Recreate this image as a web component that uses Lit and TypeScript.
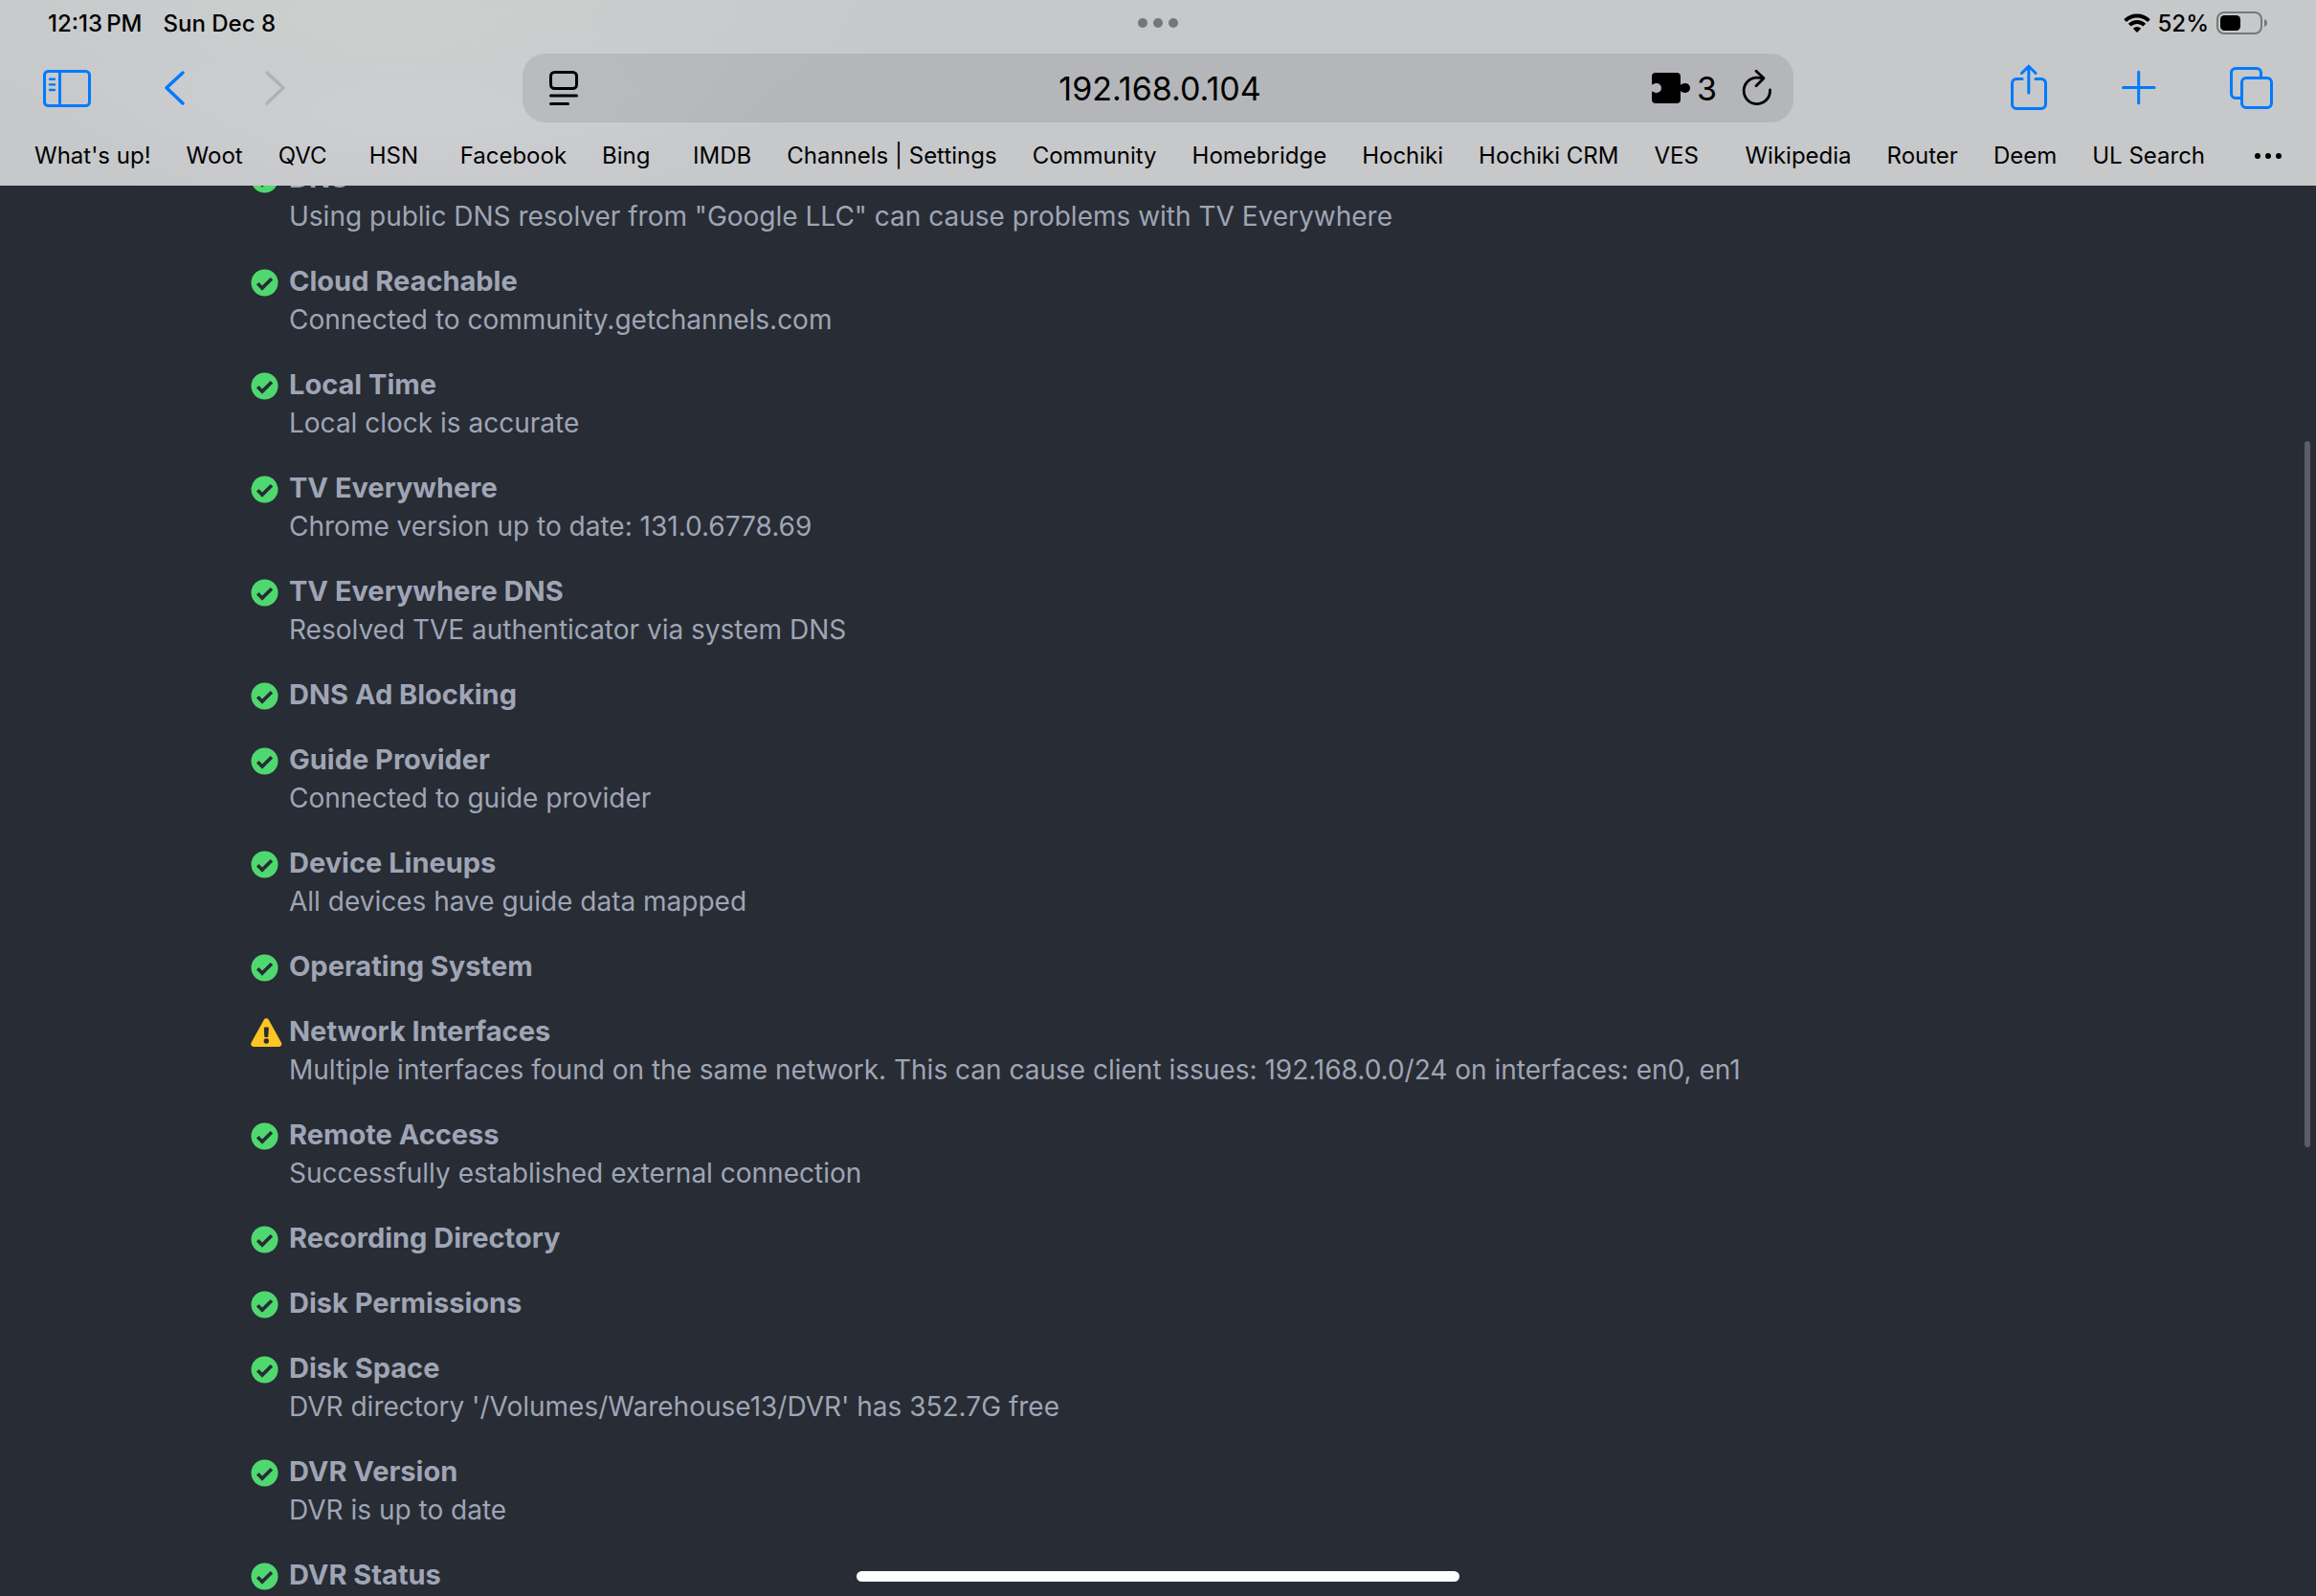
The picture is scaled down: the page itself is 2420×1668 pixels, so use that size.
import { LitElement, html, svg, css, nothing } from "lit";
import { customElement, property, state } from "lit/decorators.js";
import { classMap } from "lit/directives/class-map.js";

interface Check {
  title: string;
  detail?: string;
  warning?: boolean;
}

const BOOKMARKS = [
  "What's up!", "Woot", "QVC", "HSN", "Facebook", "Bing", "IMDB",
  "Channels | Settings", "Community", "Homebridge", "Hochiki",
  "Hochiki CRM", "VES", "Wikipedia", "Router", "Deem", "UL Search",
];

const CHECKS: Check[] = [
  { title: "DNS", detail: 'Using public DNS resolver from "Google LLC" can cause problems with TV Everywhere' },
  { title: "Cloud Reachable", detail: "Connected to community.getchannels.com" },
  { title: "Local Time", detail: "Local clock is accurate" },
  { title: "TV Everywhere", detail: "Chrome version up to date: 131.0.6778.69" },
  { title: "TV Everywhere DNS", detail: "Resolved TVE authenticator via system DNS" },
  { title: "DNS Ad Blocking" },
  { title: "Guide Provider", detail: "Connected to guide provider" },
  { title: "Device Lineups", detail: "All devices have guide data mapped" },
  { title: "Operating System" },
  {
    title: "Network Interfaces",
    detail: "Multiple interfaces found on the same network. This can cause client issues: 192.168.0.0/24 on interfaces: en0, en1",
    warning: true,
  },
  { title: "Remote Access", detail: "Successfully established external connection" },
  { title: "Recording Directory" },
  { title: "Disk Permissions" },
  { title: "Disk Space", detail: "DVR directory '/Volumes/Warehouse13/DVR' has 352.7G free" },
  { title: "DVR Version", detail: "DVR is up to date" },
  { title: "DVR Status" },
];

@customElement("status-bar")
export class StatusBar extends LitElement {
  static styles = css`
    :host {
      display: grid;
      grid-template-columns: 1fr auto 1fr;
      align-items: center;
      height: 48px;
      padding: 0 50px;
      font-size: 24px;
      font-weight: 500;
    }
    .clock { display: flex; gap: 22px; }
    .power { display: flex; align-items: center; justify-content: flex-end; gap: 8px; }
    .more { display: flex; padding: 0; border: 0; background: none; }
    svg { display: block; }
  `;

  render() {
    return html`
      <div class="clock"><span>12:13&#8201;PM</span><span>Sun Dec 8</span></div>
      <button class="more" aria-label="Window controls">
        <svg width="42" height="10" fill="#76777a">
          <circle cx="5" cy="5" r="5" /><circle cx="21" cy="5" r="5" /><circle cx="37" cy="5" r="5" />
        </svg>
      </button>
      <div class="power">
        <svg width="28" height="20" viewBox="0 0 28 20" fill="none" stroke="#000" stroke-width="4">
          <path d="M1.6 7.6A17.6 17.6 0 0 1 26.4 7.6" />
          <path d="M6.2 12.2A11 11 0 0 1 21.8 12.2" />
          <path d="M14 20l-4.2-4.3a6 6 0 0 1 8.4 0z" fill="#000" stroke="none" />
        </svg>
        <span>52%</span>
        <svg width="54" height="24" viewBox="0 0 54 24">
          <rect x="1" y="1" width="46" height="22" rx="7" fill="none" stroke="#77787a" stroke-width="2" />
          <rect x="4" y="4" width="21" height="16" rx="4.5" />
          <path d="M50 8q3 1.2 3 4t-3 4z" fill="#77787a" />
        </svg>
      </div>
    `;
  }
}

@customElement("browser-toolbar")
export class BrowserToolbar extends LitElement {
  static styles = css`
    :host {
      display: grid;
      grid-template-columns: 1fr minmax(0, 1328px) 1fr;
      align-items: center;
      padding: 8px 40px 0;
    }
    button { display: flex; padding: 0; border: 0; background: none; color: #007aff; font: inherit; }
    button:disabled { color: #b0b1b3; }
    svg { display: block; fill: none; stroke: currentColor; stroke-linecap: round; stroke-linejoin: round; }
    .left { display: flex; gap: 52px; padding-left: 2px; }
    .right { display: flex; gap: 60px; justify-content: flex-end; }
    .address {
      display: grid;
      grid-template-columns: 1fr auto 1fr;
      align-items: center;
      height: 72px;
      padding: 0 22px 0 26px;
      border-radius: 24px;
      background: rgba(60, 60, 67, 0.12);
    }
    .address button { color: #000; }
    .url {
      width: 300px;
      padding: 0;
      border: 0;
      background: none;
      color: #000;
      font: inherit;
      font-size: 34px;
      text-align: center;
      outline: none;
    }
    .actions { display: flex; justify-content: flex-end; align-items: center; gap: 26px; }
    .address .extensions { align-items: center; gap: 6px; font-size: 34px; }
  `;

  @state() private url = "192.168.0.104";

  render() {
    return html`
      <div class="left">
        <button aria-label="Show sidebar">
          <svg width="56" height="56" stroke-width="3">
            <rect x="4.5" y="10.5" width="47" height="36" rx="4" />
            <path d="M20.5 11v35" />
            <path d="M10 18.8h5M10 24.4h5M10 30h5" stroke-width="2.4" />
          </svg>
        </button>
        <button aria-label="Back">
          <svg width="56" height="56" stroke-width="3.5"><path d="M41 12L24 27.8 41 44" /></svg>
        </button>
        <button aria-label="Forward" disabled>
          <svg width="56" height="56" stroke-width="3.5"><path d="M21 12l17 15.8L21 44" /></svg>
        </button>
      </div>
      <div class="address">
        <button aria-label="Page menu">
          <svg width="34" height="40" stroke-width="3">
            <rect x="3.5" y="3.5" width="27" height="17" rx="4" />
            <path d="M3.5 28h27M3.5 36.5h18" />
          </svg>
        </button>
        <input class="url" aria-label="Address" .value=${this.url}
          @input=${(e: Event) => (this.url = (e.target as HTMLInputElement).value)} />
        <div class="actions">
          <button class="extensions" aria-label="3 extensions">
            <svg width="42" height="34">
              <path fill="currentColor" stroke="none" d="M5 1h22a4 4 0 0 1 4 4v8.5c1.5 0 2-1.500 5-1.500a5 5 0 0 1 0 10c-3 0-3.500-1.500-5-1.500V29a4 4 0 0 1-4 4H5a4 4 0 0 1-4-4v-8.500c1.500 0 2 1.500 5 1.500a5 5 0 0 0 0-10c-3 0-3.500 1.500-5 1.500V5a4 4 0 0 1 4-4z" />
            </svg>
            <span>3</span>
          </button>
          <button aria-label="Reload">
            <svg width="32" height="40" stroke-width="2.8">
              <path d="M29.5 22A13.7 13.7 0 1 1 15.8 9.2q3.5 0 6.5 .4" />
              <path d="M15 2.2l8 7.6-8 8" />
            </svg>
          </button>
        </div>
      </div>
      <div class="right">
        <button aria-label="Share">
          <svg width="56" height="56" stroke-width="3">
            <path d="M21 18.5h-6a4.5 4.5 0 0 0-4.5 4.5v22a4.5 4.5 0 0 0 4.5 4.5h26a4.5 4.5 0 0 0 4.5-4.5V23a4.5 4.5 0 0 0-4.5-4.5h-6" />
            <path d="M27.8 33V5.5M20.5 12.5l7.3-7.3 7.3 7.3" />
          </svg>
        </button>
        <button aria-label="New tab">
          <svg width="56" height="56" stroke-width="3"><path d="M10.5 27.5h32.5M26.7 11.2v32.6" /></svg>
        </button>
        <button aria-label="Tab overview">
          <svg width="56" height="56" stroke-width="3">
            <path d="M38.5 16v-4a4.5 4.5 0 0 0-4.5-4.5H12A4.5 4.5 0 0 0 7.5 12v22a4.5 4.5 0 0 0 4.5 4.5h5" />
            <rect x="18.5" y="17.5" width="31" height="31" rx="4.5" />
          </svg>
        </button>
      </div>
    `;
  }
}

@customElement("bookmarks-bar")
export class BookmarksBar extends LitElement {
  static styles = css`
    :host { display: block; padding: 4px 36px 0; font-size: 24px; line-height: 62px; }
    nav { display: flex; gap: 37px; align-items: center; white-space: nowrap; }
    a { min-width: 58px; color: #000; text-decoration: none; }
    button { display: flex; margin-left: auto; padding: 0; border: 0; background: none; }
  `;

  render() {
    return html`
      <nav aria-label="Favorites">
        ${BOOKMARKS.map((name) => html`<a href="#">${name}</a>`)}
        <button aria-label="More bookmarks">
          <svg width="28" height="8"><circle cx="3" cy="4" r="3" /><circle cx="14" cy="4" r="3" /><circle cx="25" cy="4" r="3" /></svg>
        </button>
      </nav>
    `;
  }
}

@customElement("check-row")
export class CheckRow extends LitElement {
  static styles = css`
    :host { display: grid; grid-template-columns: 40px 1fr; line-height: 40px; }
    .icon {
      display: flex;
      align-items: center;
      box-sizing: border-box;
      height: 40px;
      padding-top: 2px;
      color: #4fd86f;
    }
    .icon.warning { color: #ffc522; }
    svg { display: block; flex: none; }
    h3, p { margin: 0; }
    h3 { font-size: 29px; font-weight: 700; }
  `;

  @property({ attribute: false }) check!: Check;

  render() {
    const { title, detail, warning = false } = this.check;
    return html`
      <div class=${classMap({ icon: true, warning })}>
        ${warning
          ? svg`<svg width="34" height="30" role="img" aria-label="Warning">
              <path fill="currentColor" d="M13.8 1.7a2.9 2.9 0 0 1 5 0L32 25.7a2.9 2.9 0 0 1-2.5 4.3H3a2.9 2.9 0 0 1-2.5-4.3z" />
              <path d="M14.3 10h4l-.5 9.5h-3z" fill="#282c34" stroke="#282c34" stroke-linejoin="round" />
              <circle cx="16.3" cy="24" r="2.7" fill="#282c34" />
            </svg>`
          : svg`<svg width="29" height="29" role="img" aria-label="Passed">
              <circle cx="14.5" cy="14.5" r="14" fill="currentColor" />
              <path d="M7.2 15.2l4.8 4.9 9.9-9.9" fill="none" stroke="#282c34" stroke-width="3.6" />
            </svg>`}
      </div>
      <div>
        <h3>${title}</h3>
        ${detail ? html`<p>${detail}</p>` : nothing}
      </div>
    `;
  }
}

@customElement("app-root")
export class AppRoot extends LitElement {
  static styles = css`
    :host {
      position: relative;
      display: flex;
      flex-direction: column;
      height: 100vh;
      overflow: hidden;
      background: #282c34;
      font-family: Inter, "Liberation Sans", sans-serif;
    }
    header {
      flex: none;
      background:
        radial-gradient(ellipse 22% 90% at 17% 0%, #cbd0ce, transparent),
        radial-gradient(ellipse 16% 60% at 18% 60%, #cdced2, transparent),
        #c7c8ca;
      color: #000;
    }
    main { flex: 1; min-height: 0; overflow: hidden; color: #9fa5b5; font-size: 28px; }
    .checks {
      display: flex;
      flex-direction: column;
      gap: 28px;
      max-width: 1896px;
      margin: -28px auto 0;
    }
    .scroll-thumb {
      position: absolute;
      top: 461px;
      bottom: 469px;
      right: 6px;
      width: 6px;
      border-radius: 3px;
      background: #5b5e66;
    }
    .home-indicator {
      position: absolute;
      bottom: 15px;
      left: 37%;
      right: 37%;
      height: 11px;
      border-radius: 6px;
      background: #fff;
    }
  `;

  render() {
    return html`
      <header>
        <status-bar></status-bar>
        <browser-toolbar></browser-toolbar>
        <bookmarks-bar></bookmarks-bar>
      </header>
      <main>
        <div class="checks">
          ${CHECKS.map((check) => html`<check-row .check=${check}></check-row>`)}
        </div>
      </main>
      <div class="scroll-thumb"></div>
      <div class="home-indicator"></div>
    `;
  }
}
